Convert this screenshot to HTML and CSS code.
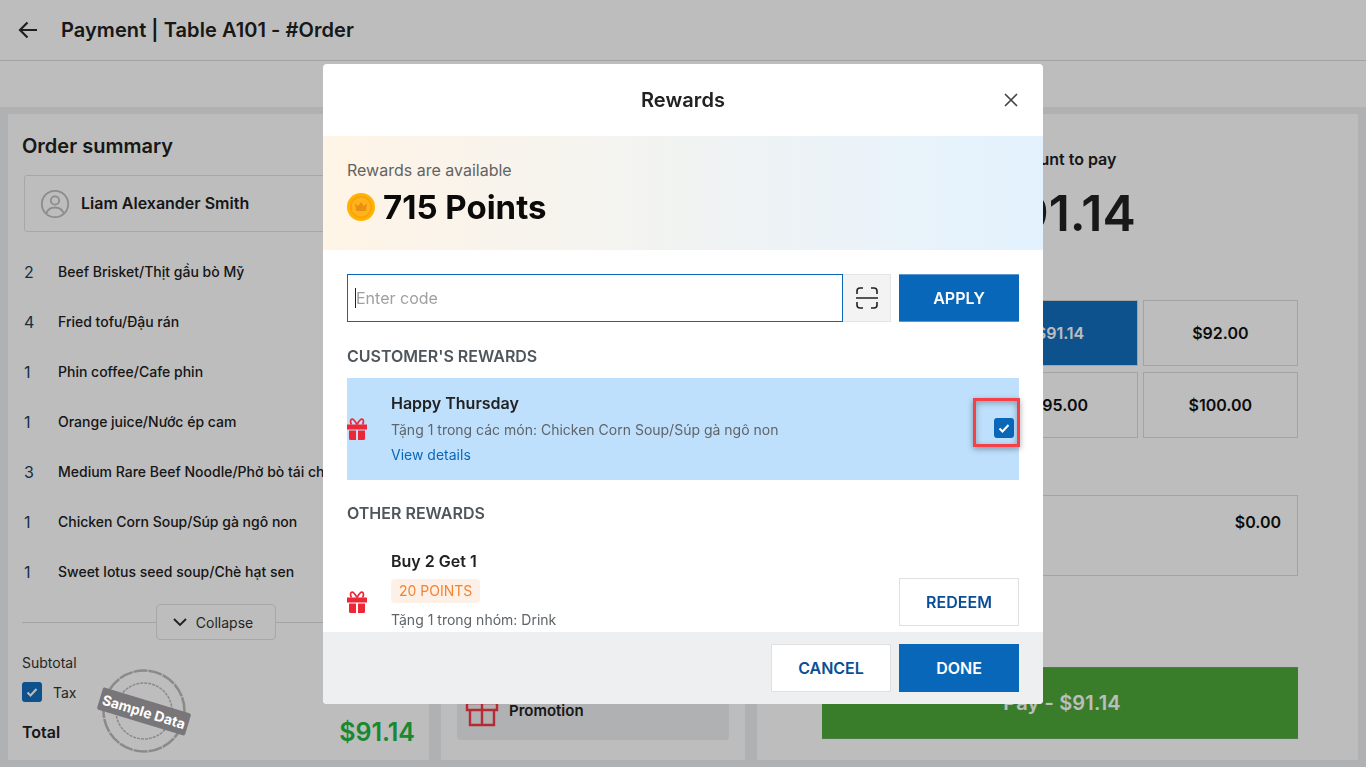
FILE: index.html
```html
<!DOCTYPE html>
<html lang="en">
<head>
  <meta charset="UTF-8" />
  <meta name="viewport" content="width=device-width, initial-scale=1.0" />
  <title>Payment | Table A101</title>
  <link rel="stylesheet" href="styles.css">
</head>
<body>
  <div class="page">
    <header class="topbar">
      <svg class="back" width="22" height="22" viewBox="0 0 22 22"><path d="M20 11H3M10.500 3.500 3 11l7.500 7.500" fill="none" stroke="#2b2b2b" stroke-width="2.200"/></svg>
      <h1>Payment | Table A101 - #Order</h1>
    </header>
    <div class="subbar"></div>

    <main class="columns">
      <section class="panel summary">
        <h2>Order summary</h2>
        <div class="customer">
          <svg width="30" height="30" viewBox="0 0 30 30" fill="none" stroke="#bdbdbd" stroke-width="1.800"><circle cx="15" cy="15" r="13.200"/><circle cx="15" cy="11.500" r="4.200"/><path d="M6.500 24c1.500-4 5-5.500 8.500-5.500s7 1.500 8.500 5.500"/></svg>
          <span>Liam Alexander Smith</span>
        </div>
        <ul class="items">
          <li><b>2</b><span>Beef Brisket/Thịt gầu bò Mỹ</span></li>
          <li><b>4</b><span>Fried tofu/Đậu rán</span></li>
          <li><b>1</b><span>Phin coffee/Cafe phin</span></li>
          <li><b>1</b><span>Orange juice/Nước ép cam</span></li>
          <li><b>3</b><span>Medium Rare Beef Noodle/Phở bò tái chín</span></li>
          <li><b>1</b><span>Chicken Corn Soup/Súp gà ngô non</span></li>
          <li><b>1</b><span>Sweet lotus seed soup/Chè hạt sen</span></li>
        </ul>
        <div class="collapse-row">
          <button class="collapse">
            <svg width="16" height="16" viewBox="0 0 16 16"><path d="M2 5l6 6 6-6" fill="none" stroke="#2b2b2b" stroke-width="1.800"/></svg>
            Collapse
          </button>
        </div>
        <div class="subtotal">Subtotal</div>
        <div class="tax">
          <span class="check"><svg width="14" height="14" viewBox="0 0 14 14"><path d="M2.500 7.500l3 3 6-6.500" fill="none" stroke="#fff" stroke-width="2"/></svg></span>
          Tax
        </div>
        <div class="total"><strong>Total</strong><span>$91.14</span></div>

        <div class="stamp">
          <svg width="92" height="88" viewBox="0 0 92 88" fill="none" stroke="#8a8a8a">
            <circle cx="46" cy="44" r="40.500" stroke-width="2.500" stroke-dasharray="14 1"/>
            <circle cx="46" cy="44" r="28" stroke-width="1.500" stroke-dasharray="3 1"/>
          </svg>
          <span>Sample Data</span>
        </div>
      </section>

      <section class="panel discounts">
        <div class="promo">
          <svg width="34" height="34" viewBox="0 0 34 34" fill="none" stroke="#f63a45" stroke-width="2.400"><path d="M2 10h30v7H2zM5 17v15h24V17M17 10v22M17 10c-4-1-8-4-6-7 2-2 5 2 6 7 1-5 4-9 6-7 2 3-2 6-6 7z"/></svg>
          <span>Promotion</span>
        </div>
      </section>

      <section class="panel pay">
        <div class="pay-label">Amount to pay</div>
        <div class="pay-amount">$91.14</div>
        <div class="quick">
          <button>$91.00</button>
          <button class="on">$91.14</button>
          <button>$92.00</button>
          <button>$93.00</button>
          <button>$95.00</button>
          <button>$100.00</button>
        </div>
        <div class="change"><span>Change</span><b>$0.00</b></div>
        <button class="pay-btn">Pay - $91.14</button>
      </section>
    </main>
  </div>

  <div class="overlay"></div>

  <div class="modal">
    <div class="modal-head">
      <h3>Rewards</h3>
      <svg class="close" width="14" height="14" viewBox="0 0 14 14"><path d="M1 1l12 12M13 1 1 13" stroke="#444" stroke-width="1.700"/></svg>
    </div>

    <div class="banner">
      <div class="banner-sub">Rewards are available</div>
      <div class="banner-points">
        <svg width="28" height="28" viewBox="0 0 28 28"><circle cx="14" cy="14" r="14" fill="#ffb300"/><circle cx="14" cy="14" r="11" fill="#fb9f0c"/><circle cx="14" cy="14" r="9.500" fill="#ffb31a"/><path d="M8 10.500l3.200 2.500L14 9l2.800 4 3.200-2.500-1.200 7.500H9.200z" fill="#ea8f12"/></svg>
        715 Points
      </div>
    </div>

    <div class="modal-body">
      <div class="code-row">
        <div class="code-input"><i></i><span>Enter code</span></div>
        <div class="scan">
          <svg width="22" height="22" viewBox="0 0 22 22" fill="none" stroke="#222" stroke-width="1.600"><path d="M1 7V4a3 3 0 0 1 3-3h3M15 1h3a3 3 0 0 1 3 3v3M21 15v3a3 3 0 0 1-3 3h-3M7 21H4a3 3 0 0 1-3-3v-3M0 11h22"/></svg>
        </div>
        <button class="btn primary apply">APPLY</button>
      </div>

      <h4>CUSTOMER'S REWARDS</h4>
      <div class="reward selected">
        <svg class="gift" width="20" height="22" viewBox="0 0 20 22"><use href="#gift"/></svg>
        <div class="reward-text">
          <div class="reward-name">Happy Thursday</div>
          <div class="reward-desc">Tặng 1 trong các món: Chicken Corn Soup/Súp gà ngô non</div>
          <a class="reward-link">View details</a>
        </div>
        <span class="check pick"><svg width="14" height="14" viewBox="0 0 14 14"><path d="M2.500 7.500l3 3 6-6.500" fill="none" stroke="#fff" stroke-width="2"/></svg></span>
        <div class="highlight"></div>
      </div>

      <h4 class="other">OTHER REWARDS</h4>
      <div class="reward">
        <svg class="gift" width="20" height="22" viewBox="0 0 20 22"><use href="#gift"/></svg>
        <div class="reward-text more">
          <div class="reward-name">Buy 2 Get 1</div>
          <span class="badge">20 POINTS</span>
          <div class="reward-desc">Tặng 1 trong nhóm: Drink</div>
        </div>
        <button class="btn outline">REDEEM</button>
      </div>
    </div>

    <div class="modal-foot">
      <button class="btn outline">CANCEL</button>
      <button class="btn primary">DONE</button>
    </div>
  </div>

  <svg width="0" height="0" class="defs">
    <symbol id="gift" viewBox="0 0 20 22">
      <path fill="#ee2737" d="M0 6.500h20v5H0zM2 12.500h7V22H3.500A1.500 1.500 0 0 1 2 20.500zM11 12.500h7v8a1.500 1.500 0 0 1-1.500 1.500H11z"/>
      <path fill="none" stroke="#ee2737" stroke-width="1.700" d="M10 6.500C8 3 6.500 1 5 1.200 3.300 1.500 3 4 4.500 6.500M10 6.500c2-3.500 3.500-5.500 5-5.300 1.700.3 2 2.800.5 5.300"/>
    </symbol>
  </svg>
</body>
</html>
```

FILE: styles.css
```css
* {
  box-sizing: border-box;
}
body {
  margin: 0;
  height: 767px;
  overflow: hidden;
  font-family: 'Inter', 'Liberation Sans', sans-serif;
  background: #eeeff0;
  color: #212121;
}
button {
  font-family: inherit;
  cursor: pointer;
}
.defs {
  position: absolute;
}

/* page behind the dialog */
.page {
  height: 767px;
  display: flex;
  flex-direction: column;
}
.topbar {
  height: 61px;
  flex: none;
  display: flex;
  align-items: center;
  padding-left: 17px;
  gap: 22px;
  background: #fff;
  border-bottom: 1px solid #dcdcdc;
}
.topbar h1 {
  margin: 0;
  font-size: 20px;
  font-weight: 600;
  letter-spacing: 0.07px;
}
.subbar {
  height: 46px;
  flex: none;
  background: #fff;
}
.columns {
  flex: 1;
  display: flex;
  gap: 12px;
  padding: 7px 8px;
  background: #eeeff0;
}
.panel {
  background: #fff;
  position: relative;
}
.summary {
  width: 421px;
  padding: 20px 14px 0;
}
.summary h2 {
  margin: 0 0 17px;
  font-size: 20px;
  line-height: 24px;
  font-weight: 600;
}
.customer {
  height: 57px;
  margin-left: 2px;
  display: flex;
  align-items: center;
  gap: 11px;
  padding-left: 15px;
  border: 1px solid #e2e2e2;
  border-radius: 3px;
  font-size: 16px;
  font-weight: 600;
}
.customer span {
  padding-bottom: 2px;
}
.items {
  list-style: none;
  margin: 14px 0 0;
  padding: 0;
}
.items li {
  height: 50px;
  display: flex;
  align-items: center;
  font-size: 14px;
  font-weight: 500;
  white-space: nowrap;
  overflow: hidden;
}
.items b {
  width: 36px;
  padding: 2px 0 0 2px;
  font-size: 16px;
  font-weight: 400;
  color: #1d3f5c;
}
.collapse-row {
  height: 36px;
  margin: 8px 5px 0 0;
  display: flex;
  justify-content: center;
  background: linear-gradient(#dcdcdc, #dcdcdc) center / 100% 1px no-repeat;
}
.collapse {
  width: 120px;
  height: 36px;
  display: flex;
  align-items: center;
  justify-content: center;
  gap: 8px;
  padding: 0 7px 0 0;
  background: #fff;
  border: 1px solid #e2e2e2;
  border-radius: 4px;
  color: #333;
  font-size: 14px;
}
.subtotal {
  margin-top: 14px;
  font-size: 14px;
  line-height: 18px;
  color: #333;
}
.tax {
  margin-top: 10px;
  display: flex;
  align-items: center;
  gap: 11px;
  font-size: 14px;
  color: #333;
}
.check {
  width: 20px;
  height: 20px;
  display: flex;
  align-items: center;
  justify-content: center;
  background: #146fbe;
  border-radius: 3px;
}
.total {
  margin-top: 15px;
  display: flex;
  justify-content: space-between;
  align-items: center;
  font-size: 16px;
}
.total strong {
  font-weight: 600;
}
.total span {
  font-size: 25px;
  font-weight: 600;
  color: #21b941;
}
/* the stamp is printed over the picture, the dim layer does not cover it */
.stamp {
  position: absolute;
  left: 90px;
  top: 553px;
  width: 92px;
  height: 88px;
  z-index: 1;
}
.stamp span {
  position: absolute;
  left: 0;
  top: 33px;
  width: 92px;
  height: 23px;
  line-height: 23px;
  text-align: center;
  background: #787679;
  border-radius: 2px;
  color: #fff;
  font-size: 14px;
  font-weight: 700;
  white-space: nowrap;
  transform: rotate(17deg);
}
.discounts {
  width: 304px;
  padding: 0 16px;
  display: flex;
  align-items: flex-end;
  padding-bottom: 20px;
}
.promo {
  width: 100%;
  height: 60px;
  display: flex;
  align-items: center;
  gap: 10px;
  padding-left: 8px;
  background: #eeeff0;
  border-radius: 3px;
  font-size: 15px;
  font-weight: 600;
}
.pay {
  flex: 1;
  padding: 35px 60px 0 65px;
}
.pay-label {
  text-align: center;
  font-size: 16px;
  line-height: 21px;
  font-weight: 600;
}
.pay-amount {
  margin-top: 13px;
  text-align: center;
  font-size: 50px;
  line-height: 60px;
  font-weight: 600;
}
.quick {
  margin-top: 57px;
  display: grid;
  grid-template-columns: repeat(3, 1fr);
  gap: 6px 5px;
}
.quick button {
  height: 66px;
  background: #fff;
  border: 1px solid #dcdcdc;
  font-size: 16px;
  font-weight: 600;
  color: #111;
}
.quick .on {
  background: #146fbe;
  color: #fff;
}
.change {
  margin-top: 57px;
  height: 81px;
  display: flex;
  justify-content: space-between;
  padding: 16px 16px 0;
  border: 1px solid #dcdcdc;
  font-size: 16px;
}
.change b {
  font-weight: 600;
  color: #111;
}
.pay-btn {
  display: block;
  width: 100%;
  height: 72px;
  margin-top: 91px;
  padding-left: 10px;
  border: none;
  border-top: 1px solid #67a75b;
  border-bottom: 1px solid #67a75b;
  background: #4ea93b;
  color: #fff;
  font-size: 20px;
  font-weight: 600;
  letter-spacing: 0.15px;
}

.overlay {
  position: fixed;
  inset: 0;
  background: rgba(0, 0, 0, 0.26);
}

/* rewards dialog */
.modal {
  position: fixed;
  left: 323px;
  top: 64px;
  width: 720px;
  height: 640px;
  z-index: 2;
  display: flex;
  flex-direction: column;
  background: #fff;
  border-radius: 4px;
  overflow: hidden;
}
.modal-head {
  height: 72px;
  flex: none;
  position: relative;
  display: flex;
  align-items: center;
  justify-content: center;
}
.modal-head h3 {
  margin: 0;
  font-size: 20px;
  font-weight: 600;
  letter-spacing: 0.1px;
}
.close {
  position: absolute;
  right: 25px;
  top: 29px;
}
.banner {
  height: 114px;
  flex: none;
  padding: 24px 24px 0;
  background: linear-gradient(90deg, #fff4e6, #e3f2fe);
}
.banner-sub {
  font-size: 16px;
  line-height: 20px;
  color: #636363;
}
.banner-points {
  margin-top: 5px;
  display: flex;
  align-items: center;
  gap: 8px;
  font-size: 33px;
  line-height: 44px;
  font-weight: 700;
  color: #0a0a0a;
}
.modal-body {
  flex: 1;
  min-height: 0;
  padding: 24px 24px 0;
  overflow: hidden;
}
.code-row {
  display: flex;
  height: 48px;
}
.code-input {
  width: 496px;
  display: flex;
  align-items: center;
  padding-left: 7px;
  border: 1px solid #0967b9;
  font-size: 16px;
  color: #a0a0a0;
}
.code-input i {
  width: 1px;
  height: 20px;
  background: #222;
}
.scan {
  width: 48px;
  margin-right: 8px;
  display: flex;
  align-items: center;
  justify-content: center;
  background: #f3f3f3;
  border: 1px solid #e4e4e4;
  border-left: none;
}
.btn {
  width: 120px;
  height: 48px;
  flex: none;
  border-radius: 0;
  font-size: 16px;
  font-weight: 600;
}
.primary {
  background: #0967b9;
  border: none;
  color: #fff;
}
.apply {
  border-top: 1px solid #5a9ad2;
  border-bottom: 1px solid #5a9ad2;
}
.outline {
  background: #fff;
  border: 1px solid #e0e0e0;
  color: #0a4f96;
}
.modal-body h4 {
  margin: 24px 0 12px;
  font-size: 16px;
  line-height: 20px;
  font-weight: 600;
  color: #4e555b;
}
.modal-body .other {
  margin: 23px 0 14px;
}
.reward {
  position: relative;
  display: flex;
  align-items: center;
  padding: 13px 0;
}
.reward.selected {
  height: 102px;
  background: #bfe0fd;
}
.selected .reward-text {
  padding-bottom: 2px;
}
.gift {
  flex: none;
  margin-right: 24px;
}
.reward-text {
  flex: 1;
  min-width: 0;
}
/* the rest of this card is scrolled out of the dialog body */
.reward-text.more {
  padding-bottom: 23px;
}
.reward-name {
  font-size: 16px;
  line-height: 22px;
  font-weight: 600;
}
.reward-desc {
  margin-top: 6px;
  font-size: 14px;
  line-height: 20px;
  color: #5f6468;
}
.reward-link {
  display: block;
  margin-top: 5px;
  font-size: 14px;
  line-height: 20px;
  color: #0967b9;
}
.badge {
  display: block;
  width: fit-content;
  margin: 7px 0 7px;
  padding: 0 8px;
  height: 24px;
  line-height: 24px;
  background: #fdf1e7;
  border-radius: 4px;
  font-size: 14px;
  color: #f58233;
}
.badge + .reward-desc {
  margin-top: 0;
}
.pick {
  flex: none;
  margin: -2px 5px 0 0;
  background: #0967b9;
}
/* red marker drawn round the checkbox on the screenshot */
.highlight {
  position: absolute;
  left: 626px;
  top: 20px;
  width: 47px;
  height: 49px;
  border: 3px solid #f44048;
  box-shadow: 0 2px 6px rgba(0, 0, 0, 0.35), inset 0 2px 6px rgba(0, 0, 0, 0.3);
}
.modal-foot {
  height: 72px;
  flex: none;
  display: flex;
  justify-content: flex-end;
  align-items: center;
  gap: 8px;
  padding-right: 24px;
  background: #eeeff0;
}
```
